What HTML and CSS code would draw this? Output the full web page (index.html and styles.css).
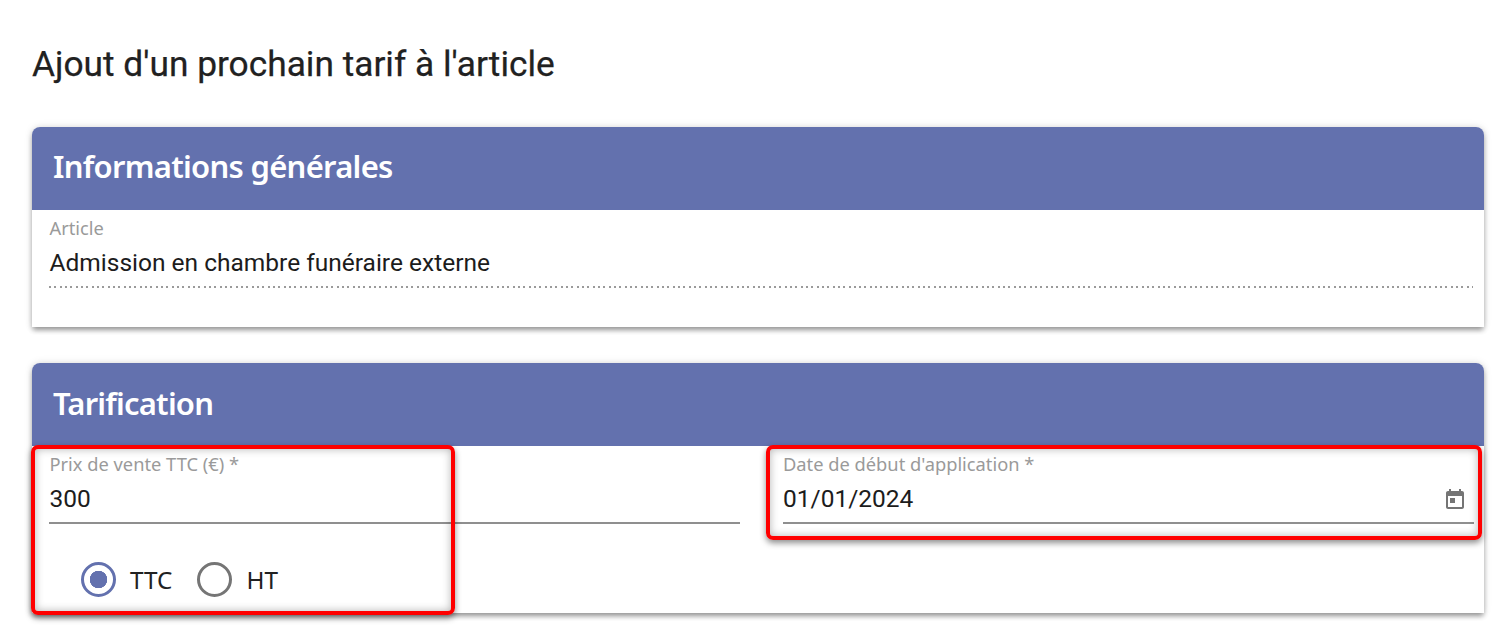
FILE: index.html
```html
<!DOCTYPE html>
<html lang="fr">
<head>
<meta charset="utf-8">
<title>Ajout d'un prochain tarif</title>
<link rel="stylesheet" href="styles.css">
</head>
<body>
<main class="page">
  <h1 class="title">Ajout d'un prochain tarif à l'article</h1>
  <section class="card card-info">
    <h2 class="card-head">Informations générales</h2>
    <div class="card-body">
      <div class="field">
        <span class="label">Article</span>
        <span class="value">Admission en chambre funéraire externe</span>
        <span class="rule rule-dotted"></span>
      </div>
    </div>
  </section>
  <section class="card card-tarif">
    <h2 class="card-head">Tarification</h2>
    <div class="card-body tarif-grid">
      <div class="col">
        <div class="field">
          <span class="label">Prix de vente TTC (€) *</span>
          <span class="value">300</span>
          <span class="rule"></span>
        </div>
        <div class="radios">
          <span class="radio radio-on"></span><span class="radio-text">TTC</span>
          <span class="radio"></span><span class="radio-text">HT</span>
        </div>
      </div>
      <div class="col col-date">
        <div class="field">
          <span class="label">Date de début d'application *</span>
          <span class="value value-date">01/01/2024
            <svg class="cal" viewBox="0 0 24 24" width="24" height="24"><path fill="#757575" d="M19 3h-1V1h-2v2H8V1H6v2H5c-1.100 0-2 .9-2 2v14c0 1.100.9 2 2 2h14c1.100 0 2-.9 2-2V5c0-1.100-.9-2-2-2zm0 16H5V8h14v11zM7 10h5v5H7z"/></svg>
          </span>
          <span class="rule"></span>
        </div>
      </div>
    </div>
    <div class="mark mark-a"></div>
    <div class="mark mark-b"></div>
  </section>
</main>
</body>
</html>
```

FILE: styles.css
```css
* { box-sizing: border-box; }
html, body { margin: 0; height: 632px; overflow: hidden; background: #fff; }
.page { padding: 41px 23px 0 32px; }
.title {
  margin: 0 0 40px;
  height: 46px;
  font: 400 35.3px/46px Roboto, sans-serif;
  -webkit-text-stroke: .25px #212121;
  color: #212121;
}
.card {
  background: #fff;
  border-radius: 8px 8px 0 0;
  box-shadow: 0 4px 5px -1px rgba(0,0,0,.3), 0 2px 6px 0 rgba(0,0,0,.14), 0 0 8px 0 rgba(0,0,0,.1);
}
.card-info { height: 200px; margin-bottom: 36px; }
.card-tarif { height: 250px; position: relative; }
.card-head {
  margin: 0;
  height: 83px;
  padding-left: 21px;
  background: #6371ae;
  border-radius: 8px 8px 0 0;
  color: #fff;
  font: 600 31px/79px "Noto Sans", sans-serif;
  letter-spacing: -.72px;
}
.card-tarif .card-head { line-height: 81px; letter-spacing: -.8px; }
.card-body { padding: 6px 11px 0 17px; }
.tarif-grid { display: grid; grid-template-columns: 691px 691px; column-gap: 43px; }
.field { display: flex; flex-direction: column; }
.label { font: 400 18.3px/24px "Noto Sans", sans-serif; color: #9a9a9a; height: 24px; padding-left: .5px; }
.value { font: 400 24.5px/36px Roboto, sans-serif; color: #1c1c1c; height: 42px; padding: 4px 0 0 .5px; display: flex; justify-content: space-between; align-items: center; }
.col-date .label, .col-date .value { padding-left: 0; }
.cal { margin: 2px 7px 0 0; }
.rule { height: 2px; background: #8f8f8f; margin-top: 4px; }
.rule-dotted { background: repeating-linear-gradient(90deg, #9a9a9a 0 2px, transparent 2px 5.33px); }
.radios { display: flex; align-items: center; margin: 38px 0 0 32px; }
.radio { width: 35px; height: 35px; border-radius: 50%; border: 3px solid #757575; background: #fff; }
.radio-on { border-color: #6371ae; background: radial-gradient(circle, #6371ae 0 8.5px, #fff 9px); }
.radio-text { font: 400 24.3px/35px "Noto Sans", sans-serif; color: #212121; margin: 0 25px 0 14px; }
.mark { position: absolute; border: 4px solid #f00; border-radius: 7px; box-shadow: 0 3px 6px rgba(0,0,0,.45), inset 0 0 8px rgba(0,0,0,.3); pointer-events: none; }
.mark-a { left: -1px; top: 82px; width: 424px; height: 170px; }
.mark-b { left: 734px; top: 82px; width: 716px; height: 95px; }
```
